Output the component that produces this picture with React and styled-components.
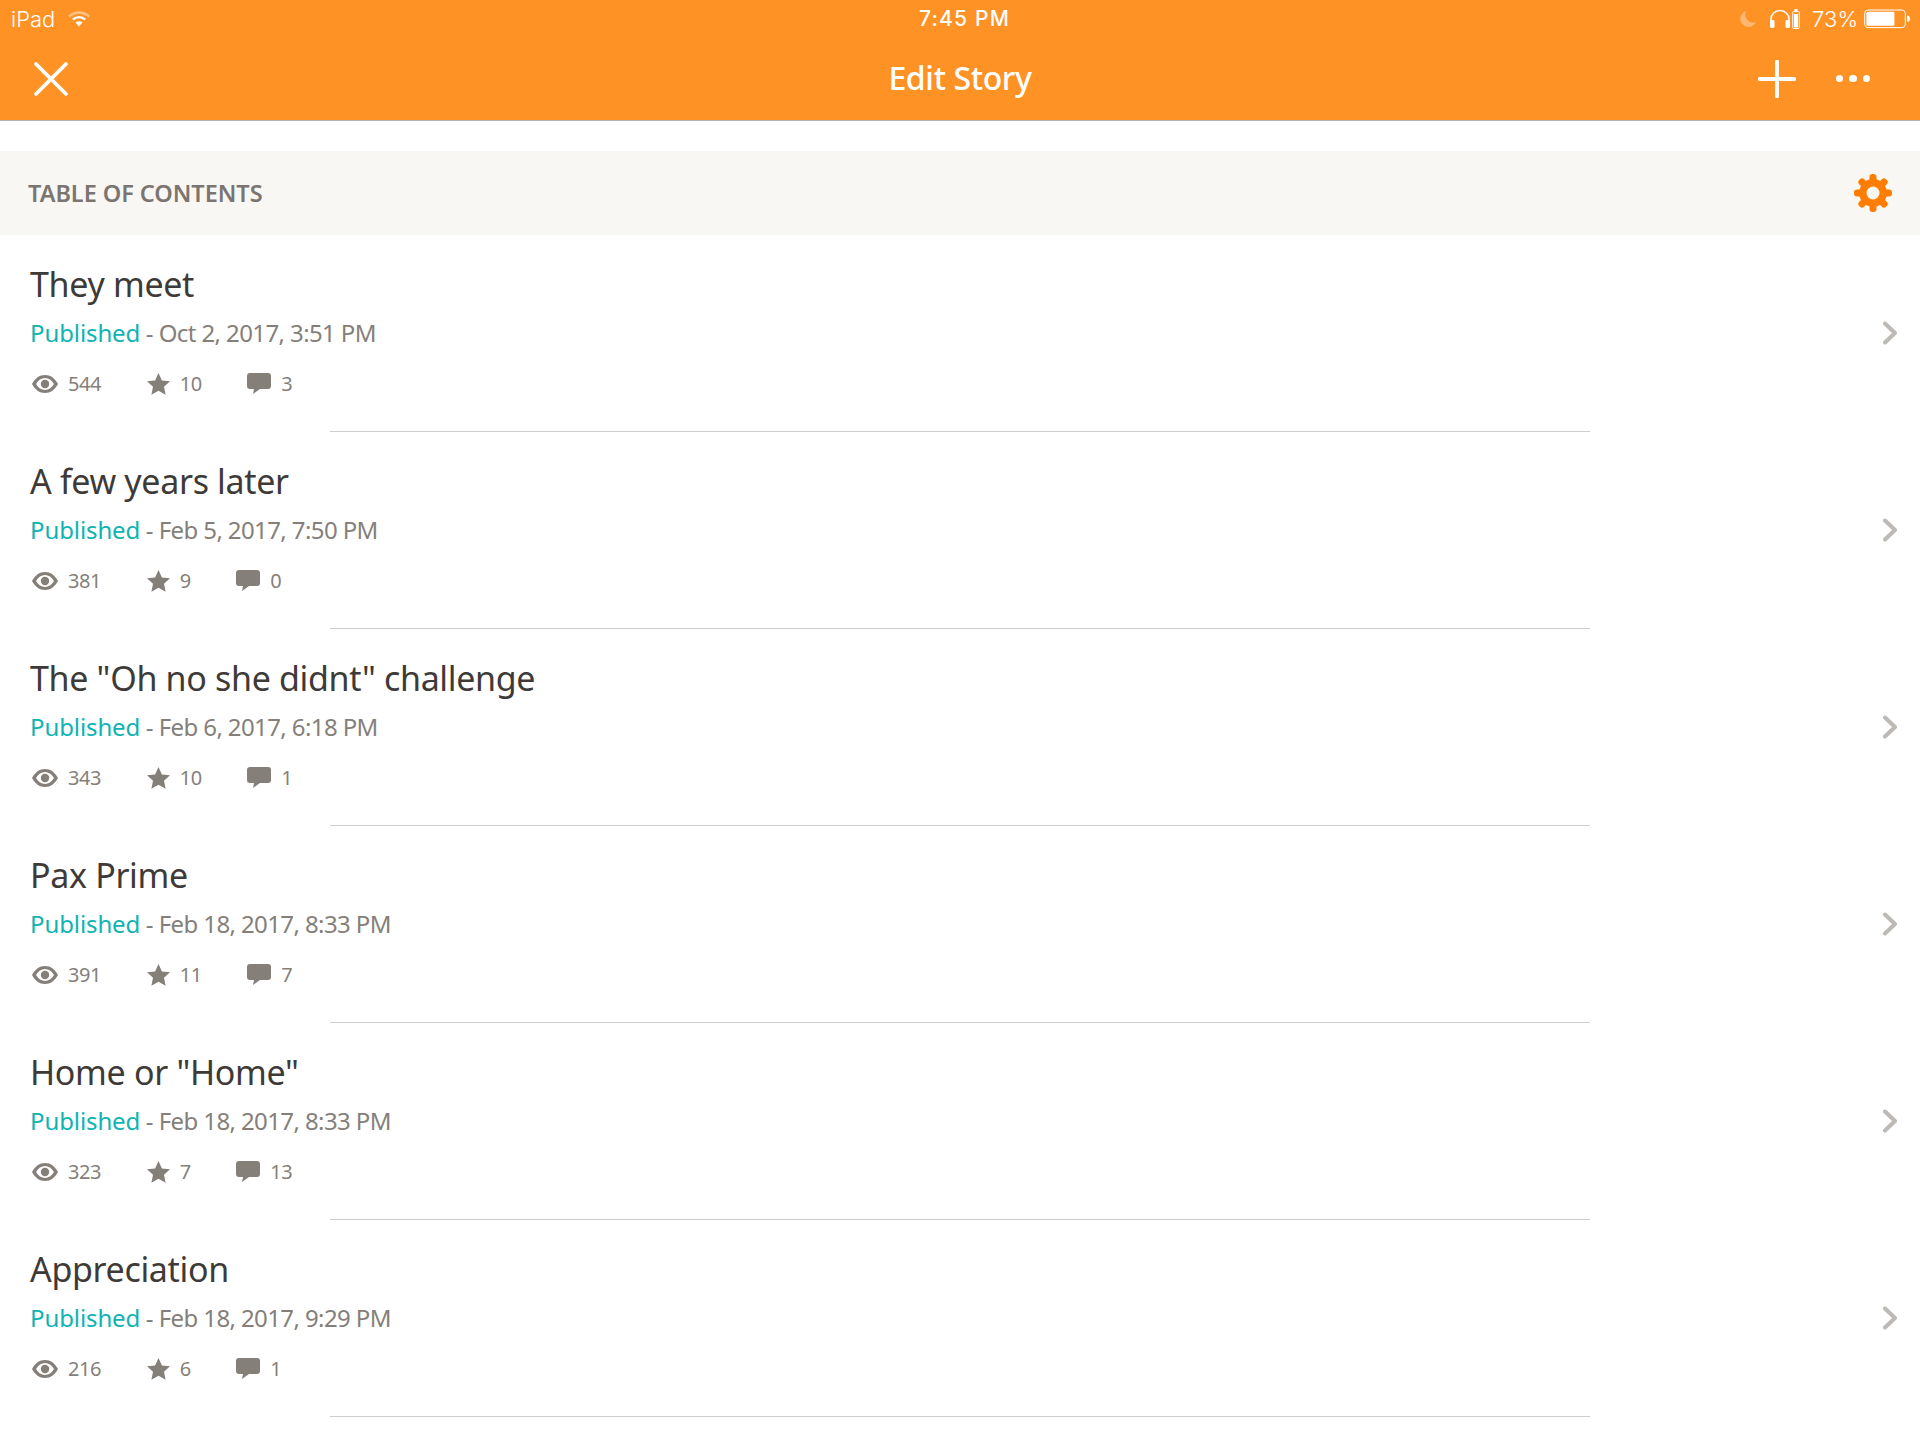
import React from 'react'
import styled, { createGlobalStyle } from 'styled-components'

const chapters = [
  { title: 'They meet', date: 'Oct 2, 2017, 3:51 PM', views: 544, stars: 10, comments: 3 },
  { title: 'A few years later', date: 'Feb 5, 2017, 7:50 PM', views: 381, stars: 9, comments: 0 },
  { title: 'The "Oh no she didnt" challenge', date: 'Feb 6, 2017, 6:18 PM', views: 343, stars: 10, comments: 1 },
  { title: 'Pax Prime', date: 'Feb 18, 2017, 8:33 PM', views: 391, stars: 11, comments: 7 },
  { title: 'Home or "Home"', date: 'Feb 18, 2017, 8:33 PM', views: 323, stars: 7, comments: 13 },
  { title: 'Appreciation', date: 'Feb 18, 2017, 9:29 PM', views: 216, stars: 6, comments: 1 }
]

const gearTeeth = [0, 45, 90, 135, 180, 225, 270, 315]

const App = () => (
  <Page>
    <GlobalStyle />
    <Header>
      <StatusBar>
        <StatusSide>
          <StatusText>iPad</StatusText>
          <svg width="24" height="18" viewBox="0 0 24 18" fill="none">
            <path d="M2 6.5C8 1.2 16 1.2 22 6.5" stroke="#fff" strokeOpacity=".45" strokeWidth="2.4" />
            <path d="M5.8 9.6C9.6 6.4 14.4 6.4 18.2 9.6" stroke="#fff" strokeWidth="2.4" />
            <path d="M8.5 12.6L12 16.4L15.5 12.6C13.5 10.8 10.5 10.8 8.5 12.6Z" fill="#fff" />
          </svg>
        </StatusSide>
        <Clock>7:45 PM</Clock>
        <StatusSide>
          <svg width="18" height="18" viewBox="0 0 18 18">
            <path d="M7 1A8.2 8.2 0 1 0 17 12A8 8 0 0 1 7 1Z" fill="#fff" fillOpacity=".35" />
          </svg>
          <HeadsetGroup>
            <svg width="22" height="20" viewBox="0 0 22 20" fill="none">
              <path d="M2 15V10A9 8.5 0 0 1 20 10V15" stroke="#fff" strokeWidth="1.6" />
              <rect x="1" y="11" width="4.5" height="8" rx="1.4" fill="#fff" />
              <rect x="16.5" y="11" width="4.5" height="8" rx="1.4" fill="#fff" />
            </svg>
            <svg width="8" height="20" viewBox="0 0 8 20" fill="none">
              <rect x="2.5" y="0" width="3" height="2" fill="#fff" />
              <rect x=".7" y="2.5" width="6.6" height="17" rx="1" stroke="#fff" strokeWidth="1" />
              <rect x="2" y="5" width="4" height="13.4" fill="#fff" />
            </svg>
          </HeadsetGroup>
          <BatteryText>73%</BatteryText>
          <svg width="46" height="20" viewBox="0 0 46 20" fill="none">
            <rect x=".7" y="1" width="40.6" height="17.6" rx="3.4" stroke="#fff" strokeWidth="1" />
            <rect x="2.4" y="2.8" width="28" height="14" rx="1.4" fill="#fff" />
            <path d="M43 6.5C45 6.7 46 8 46 9.8C46 11.6 45 12.9 43 13.1Z" fill="#fff" />
          </svg>
        </StatusSide>
      </StatusBar>
      <NavBar>
        <NavButton>
          <svg width="36" height="36" viewBox="0 0 36 36" fill="none">
            <path d="M3 3L33 33M33 3L3 33" stroke="#fff" strokeWidth="3.8" strokeLinecap="round" />
          </svg>
        </NavButton>
        <NavTitle>Edit Story</NavTitle>
        <NavActions>
          <svg width="38" height="38" viewBox="0 0 38 38" fill="none">
            <path d="M19 1.5V36.5M1.5 19H36.5" stroke="#fff" strokeWidth="3.8" strokeLinecap="round" />
          </svg>
          <Dots>
            <Dot />
            <Dot />
            <Dot />
          </Dots>
        </NavActions>
      </NavBar>
    </Header>
    <SectionHeader>
      <SectionTitle>TABLE OF CONTENTS</SectionTitle>
      <svg width="38" height="38" viewBox="0 0 38 38" fill="none">
        {gearTeeth.map((angle) => (
          <rect key={angle} x="15.5" y="0" width="7" height="10" rx="3" fill="#ff7d00" transform={`rotate(${angle} 19 19)`} />
        ))}
        <circle cx="19" cy="19" r="10.2" stroke="#ff7d00" strokeWidth="7.4" />
      </svg>
    </SectionHeader>
    {chapters.map((chapter) => (
      <ChapterRow key={chapter.title} chapter={chapter} />
    ))}
  </Page>
)

const ChapterRow = ({ chapter }) => (
  <Row>
    <RowMain>
      <RowBody>
        <ChapterTitle>{chapter.title}</ChapterTitle>
        <Meta>
          <Status>Published</Status> - {chapter.date}
        </Meta>
        <Stats>
          <Stat>
            <svg width="26" height="18" viewBox="0 0 26 18">
              <path
                fillRule="evenodd"
                fill="#857f7a"
                d="M13 0C7.500 0 3 3.300 0 9c3 5.700 7.500 9 13 9s10-3.300 13-9c-3-5.700-7.500-9-13-9zm0 3c3.600 0 6.800 2.200 9 6-2.200 3.800-5.400 6-9 6s-6.800-2.200-9-6c2.200-3.800 5.400-6 9-6zM13 4.800a4.200 4.200 0 1 0 0 8.400 4.200 4.200 0 0 0 0-8.400z"
              />
            </svg>
            <StatCount>{chapter.views}</StatCount>
          </Stat>
          <Stat>
            <svg width="23" height="22" viewBox="0 0 23 22">
              <path fill="#857f7a" d="M11.500 0l3.400 7.400 8.100.9-6 5.500 1.600 8-7.100-4-7.100 4 1.600-8-6-5.500 8.100-.9z" />
            </svg>
            <StatCount>{chapter.stars}</StatCount>
          </Stat>
          <Stat>
            <svg width="24" height="21" viewBox="0 0 24 21">
              <path fill="#857f7a" d="M3 0h18a3 3 0 0 1 3 3v10a3 3 0 0 1-3 3H13l-7 5 1-5H3a3 3 0 0 1-3-3V3a3 3 0 0 1 3-3z" />
            </svg>
            <StatCount>{chapter.comments}</StatCount>
          </Stat>
        </Stats>
      </RowBody>
      <svg width="16" height="24" viewBox="0 0 16 24" fill="none">
        <path d="M3 2.500L13 12L3 21.500" stroke="#bdb9b5" strokeWidth="4" strokeLinecap="round" strokeLinejoin="round" />
      </svg>
    </RowMain>
    <Divider />
  </Row>
)

const GlobalStyle = createGlobalStyle`
  html, body {
    margin: 0;
    padding: 0;
    background: #fff;
    font-family: "Noto Sans", "Open Sans", sans-serif;
  }
`
const Page = styled.div`
  width: 1920px;
  height: 1440px;
  overflow: hidden;
  background: #fff;
`
const Header = styled.header`
  height: 120px;
  background: #ff9225;
  border-bottom: 1px solid #b4b4b4;
  color: #fff;
`
const StatusBar = styled.div`
  height: 38px;
  padding: 0 10px 0 11px;
  display: flex;
  align-items: center;
  justify-content: space-between;
  position: relative;
`
const StatusSide = styled.div`
  display: flex;
  align-items: center;
  gap: 12px;
`
const StatusText = styled.span`
  font-family: "Inter", sans-serif;
  font-size: 22px;
  font-weight: 300;
`
const BatteryText = styled(StatusText)`
  margin-right: -6px;
`
const HeadsetGroup = styled.div`
  display: flex;
  align-items: center;
  gap: 1px;
`
const Clock = styled.span`
  position: absolute;
  left: 919px;
  top: 6px;
  font-family: "Inter", sans-serif;
  font-size: 21px;
  font-weight: 500;
  letter-spacing: 1.2px;
`
const NavBar = styled.div`
  height: 81px;
  padding: 0 50px 4px 33px;
  display: flex;
  align-items: center;
  justify-content: space-between;
  position: relative;
`
const NavButton = styled.div`
  display: flex;
`
const NavTitle = styled.div`
  position: absolute;
  left: 0;
  right: 0;
  top: 20px;
  text-align: center;
  font-size: 32px;
  line-height: 40px;
  font-weight: 500;
  letter-spacing: -0.35px;
`
const NavActions = styled.div`
  display: flex;
  align-items: center;
  gap: 39.5px;
`
const Dots = styled.div`
  display: flex;
  gap: 6px;
`
const Dot = styled.span`
  width: 7.5px;
  height: 7.5px;
  border-radius: 50%;
  background: #fff;
`
const SectionHeader = styled.div`
  margin-top: 30px;
  height: 84px;
  background: #f9f7f3;
  padding: 0 28px 0 28px;
  display: flex;
  align-items: center;
  justify-content: space-between;
`
const SectionTitle = styled.div`
  font-size: 23.5px;
  font-weight: 600;
  color: #7b7571;
  letter-spacing: -0.05px;
`
const Row = styled.div`
  height: 197px;
  display: flex;
  flex-direction: column;
`
const RowMain = styled.div`
  flex: 1;
  padding: 0 22px 0 30px;
  display: flex;
  align-items: center;
  justify-content: space-between;
`
const RowBody = styled.div`
  display: flex;
  flex-direction: column;
  margin-bottom: 10px;
`
const ChapterTitle = styled.div`
  font-size: 34px;
  line-height: 50px;
  color: #3e3a37;
  letter-spacing: -0.33px;
`
const Meta = styled.div`
  margin-top: 4px;
  font-size: 24px;
  line-height: 40px;
  color: #857f7a;
  letter-spacing: -0.6px;
`
const Status = styled.span`
  color: #0fb3b3;
  letter-spacing: -0.1px;
`
const Stats = styled.div`
  margin-top: 17px;
  display: flex;
  align-items: center;
  gap: 43.5px;
`
const Stat = styled.div`
  display: flex;
  align-items: center;
  gap: 10px;
  padding-left: 2px;
`
const StatCount = styled.span`
  font-size: 20px;
  line-height: 28px;
  color: #857f7a;
  letter-spacing: -0.4px;
`
const Divider = styled.div`
  margin-left: 330px;
  width: 1260px;
  height: 1px;
  background: #cfcdcb;
`

export default App
